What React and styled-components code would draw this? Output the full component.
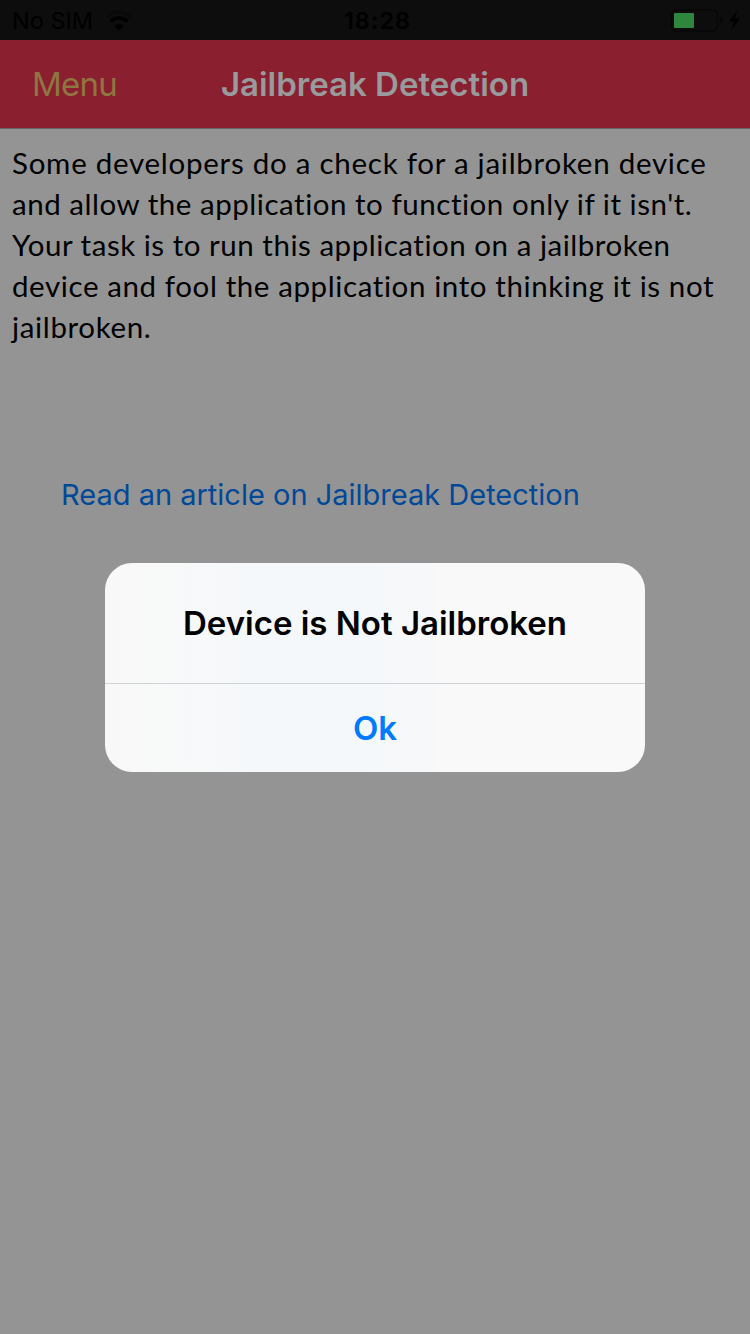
import React from "react";
import styled, { createGlobalStyle } from "styled-components";

const GlobalStyle = createGlobalStyle`
  * { box-sizing: border-box; }
  body { margin: 0; background: #949494; }
`;

const Screen = styled.div`
  position: relative;
  display: flex;
  flex-direction: column;
  width: 750px;
  height: 1334px;
  overflow: hidden;
  background: #949494;
  font-family: Inter, "Liberation Sans", sans-serif;
`;

const StatusBar = styled.header`
  display: grid;
  grid-template-columns: 1fr auto 1fr;
  align-items: center;
  height: 40px;
  padding: 0 9px 0 12px;
  background: #0d0d0d;
  color: #000;
`;

const StatusGroup = styled.div`
  display: flex;
  align-items: center;
  justify-content: ${(p) => (p.$end ? "flex-end" : "flex-start")};
`;

const StatusText = styled.span`
  padding-top: 2px;
  font-size: 23.5px;
  line-height: 38px;
  font-weight: 400;
  white-space: nowrap;
`;

const Clock = styled(StatusText)`
  margin-left: 2px;
  font-weight: 600;
  letter-spacing: 1px;
`;

const WifiIcon = styled.svg`
  width: 28px;
  height: 21px;
  margin: 1px 0 0 12px;
`;

const BatteryIcon = styled.svg`
  width: 71px;
  height: 24px;
  flex: none;
`;

const NavBar = styled.nav`
  display: grid;
  grid-template-columns: 1fr auto 1fr;
  align-items: center;
  height: 89px;
  padding: 0 32px;
  background: #8a1f30;
  border-bottom: 1px solid #676767;
`;

const NavButton = styled.button`
  justify-self: start;
  padding: 0;
  border: 0;
  background: none;
  color: #8f7640;
  font: 400 33px/40px Inter, sans-serif;
  letter-spacing: -0.8px;
`;

const NavTitle = styled.h1`
  margin: 0;
  color: #989a9c;
  font-size: 33px;
  line-height: 40px;
  font-weight: 600;
  letter-spacing: 0;
`;

const Content = styled.main`
  display: flex;
  flex-direction: column;
  align-items: flex-start;
  padding: 13px 12px 0;
`;

const Description = styled.p`
  margin: 0;
  color: #000;
  font-family: Lato, sans-serif;
  font-size: 29.5px;
  line-height: 41px;
  white-space: nowrap;
`;

const Line = styled.span`
  display: block;
  letter-spacing: ${(p) => p.$spacing}px;
`;

const ArticleLink = styled.a`
  margin: 130px 0 0 49px;
  color: #004999;
  font-size: 29px;
  line-height: 36px;
  letter-spacing: 0;
  white-space: nowrap;
`;

const Overlay = styled.div`
  position: absolute;
  inset: 0;
  display: flex;
  align-items: center;
  justify-content: center;
`;

const Alert = styled.section`
  display: flex;
  flex-direction: column;
  width: 540px;
  height: 209px;
  border-radius: 27px;
  overflow: hidden;
  background: linear-gradient(90deg, #f8f8f8 0%, #f8f9f9 10%, #f5f8fa 28%, #f5f8fa 48%, #f7f8fa 61%, #f9f9f9 62%, #f9f9f9 100%);
`;

const AlertTitle = styled.h2`
  margin: 0;
  height: 121px;
  color: #000;
  text-align: center;
  font-size: 33px;
  line-height: 121px;
  font-weight: 600;
  border-bottom: 1px solid #cfd3d8;
`;

const AlertButton = styled.button`
  flex: 1;
  padding: 0;
  border: 0;
  background: none;
  color: #007aff;
  font: 600 33px/88px Inter, sans-serif;
`;

const LINES = [
  ["Some developers do a check for a jailbroken device", 0.74],
  ["and allow the application to function only if it isn't.", 0.53],
  ["Your task is to run this application on a jailbroken", 0.52],
  ["device and fool the application into thinking it is not", 0.6],
  ["jailbroken.", 0.65],
];

export default function App() {
  return (
    <Screen>
      <GlobalStyle />
      <StatusBar>
        <StatusGroup>
          <StatusText>No SIM</StatusText>
          <WifiIcon viewBox="0 0 28 21">
            <path d="M2 7A17.3 17.3 0 0 1 26 7" fill="none" stroke="#0a0a0a" strokeWidth="3.2" />
            <path d="M5.600 11.500A12 12 0 0 1 22.400 11.500" fill="none" stroke="#000" strokeWidth="3.600" />
            <path d="M9.400 16.200Q14 12 18.600 16.200L14 20.600Z" fill="#000" />
          </WifiIcon>
        </StatusGroup>
        <Clock>18:28</Clock>
        <StatusGroup $end>
          <BatteryIcon viewBox="0 0 71 24">
            <rect x="1.500" y="2" width="46" height="21" rx="5" fill="none" stroke="#080808" strokeWidth="2" />
            <rect x="4" y="5" width="20" height="15" rx="1" fill="#2f873e" />
            <path d="M50 9q3 1 3 3.500t-3 3.500z" fill="#080808" />
            <path d="M67 3L59 13.500h5L61.500 21.500 70 10.500h-5z" fill="#000" />
          </BatteryIcon>
        </StatusGroup>
      </StatusBar>
      <NavBar>
        <NavButton>Menu</NavButton>
        <NavTitle>Jailbreak Detection</NavTitle>
      </NavBar>
      <Content>
        <Description>
          {LINES.map(([text, spacing]) => (
            <Line key={text} $spacing={spacing}>{text}</Line>
          ))}
        </Description>
        <ArticleLink>Read an article on Jailbreak Detection</ArticleLink>
      </Content>
      <Overlay>
        <Alert role="alertdialog">
          <AlertTitle>Device is Not Jailbroken</AlertTitle>
          <AlertButton>Ok</AlertButton>
        </Alert>
      </Overlay>
    </Screen>
  );
}
